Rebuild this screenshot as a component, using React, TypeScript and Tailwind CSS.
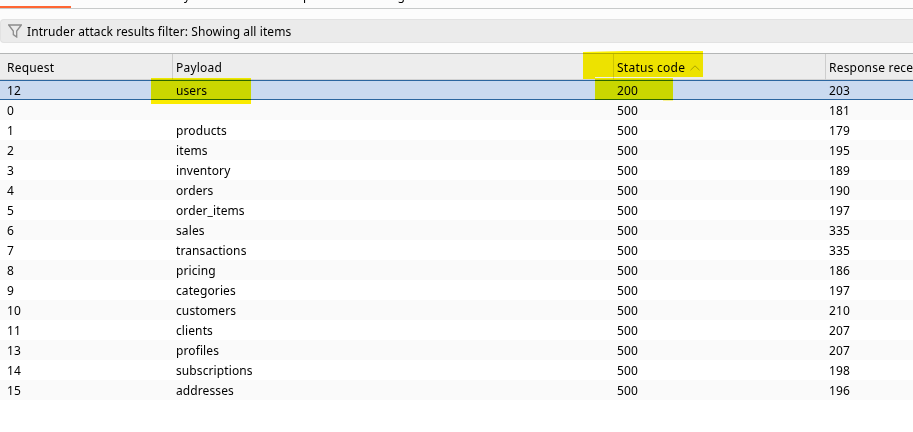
const rows: [string, string, string, string][] = [
  ["12", "users", "200", "203"],
  ["0", "", "500", "181"],
  ["1", "products", "500", "179"],
  ["2", "items", "500", "195"],
  ["3", "inventory", "500", "189"],
  ["4", "orders", "500", "190"],
  ["5", "order_items", "500", "197"],
  ["6", "sales", "500", "335"],
  ["7", "transactions", "500", "335"],
  ["8", "pricing", "500", "186"],
  ["9", "categories", "500", "197"],
  ["10", "customers", "500", "210"],
  ["11", "clients", "500", "207"],
  ["13", "profiles", "500", "207"],
  ["14", "subscriptions", "500", "198"],
  ["15", "addresses", "500", "196"],
];

const columns = "grid grid-cols-[172px_441px_212px_88px]";

function Tabs() {
  return (
    <div className="relative h-[9px] shrink-0 overflow-hidden border-b border-[#c8caca]">
      <div className="flex h-[8px] items-end pl-[170px] leading-[16px]">
        <span className="mb-[4px] w-[78px]">Payloads</span>
        <span className="mb-[4px] w-[117px]">Resource pool</span>
        <span className="mb-[4px]">Settings</span>
      </div>
    </div>
  );
}

function Filter() {
  return (
    <div className="mt-[10px] flex h-6 shrink-0 items-center rounded-l-sm border-y border-l border-[#e2e2e2] bg-[#ebebeb] pl-[7px]">
      <svg width="14" height="14" viewBox="0 0 14 14" fill="none" stroke="#8c8c8c" strokeWidth="1.3">
        <path d="M.7 1h12.6L8.7 7v6L5.3 10.6V7z" />
      </svg>
      <span className="ml-[5px] mt-[2px] whitespace-nowrap tracking-[0.085px]">
        Intruder attack results filter: Showing all items
      </span>
    </div>
  );
}

export default function App() {
  return (
    <div className="relative flex h-[432px] w-[913px] flex-col overflow-hidden bg-[#fcfcfc] font-['Noto_Sans','Open_Sans',sans-serif] text-[12px] leading-5 text-black">
      <Tabs />
      <div className="absolute left-0 top-[6px] h-[2px] w-[71px] bg-[#ff6633]" />
      <Filter />
      <div className="mt-[10px] flex flex-1 flex-col border-t border-[#b4b6b6] bg-white">
        <div
          className={`${columns} h-[26px] shrink-0 border-b border-[#d2d2d2] bg-[#ededed] leading-[27px] tracking-[0.2px]`}
        >
          <div className="pl-[7px]">Request</div>
          <div className="border-l border-[#cdcdcd] pl-[3px]">Payload</div>
          <div className="flex items-center border-l border-[#cdcdcd] pl-[3px]">
            <span className="tracking-[0.25px]">Status code</span>
            <svg className="ml-[5px] mt-px" width="10" height="6" viewBox="0 0 10 6" fill="none" stroke="#a8a8a8">
              <path d="M.5 5.2L5 .8l4.500 4.400" />
            </svg>
          </div>
          <div className="overflow-hidden whitespace-nowrap border-l border-[#cdcdcd] pl-[3px]">Response received</div>
        </div>
        {rows.map(([request, payload, status, response], i) => (
          <div
            key={request}
            className={`${columns} h-5 shrink-0 tracking-[0.1px] ${
              i === 0
                ? "border-y border-[#2b66a0] bg-[#cadaf0] leading-[19px]"
                : i % 2
                  ? "bg-[#fafafa] leading-[22px]"
                  : "bg-white leading-[22px]"
            }`}
          >
            <span className="pl-[7px]">{request}</span>
            <span className="pl-1">{payload}</span>
            <span className="pl-1">{status}</span>
            <span className="pl-1">{response}</span>
          </div>
        ))}
      </div>
      <div className="absolute left-[151px] top-[78px] h-[22px] w-[100px] bg-[#fffc00] mix-blend-multiply" />
      <div className="absolute left-[151px] top-[100px] h-[4px] w-[100px] bg-[#fff000] mix-blend-multiply" />
      <div className="absolute left-[583px] top-[51px] h-[28px] w-[120px] bg-[#fff400] mix-blend-multiply [clip-path:polygon(0_4%,35%_0,100%_0,100%_93%,10%_93%,10%_100%,0_100%)]" />
      <div className="absolute left-[595px] top-[78px] h-[22px] w-[78px] bg-[#fffc00] mix-blend-multiply" />
      <div className="absolute left-[663px] top-[100px] h-px w-[10px] bg-[#fff89a] mix-blend-multiply" />
    </div>
  );
}
